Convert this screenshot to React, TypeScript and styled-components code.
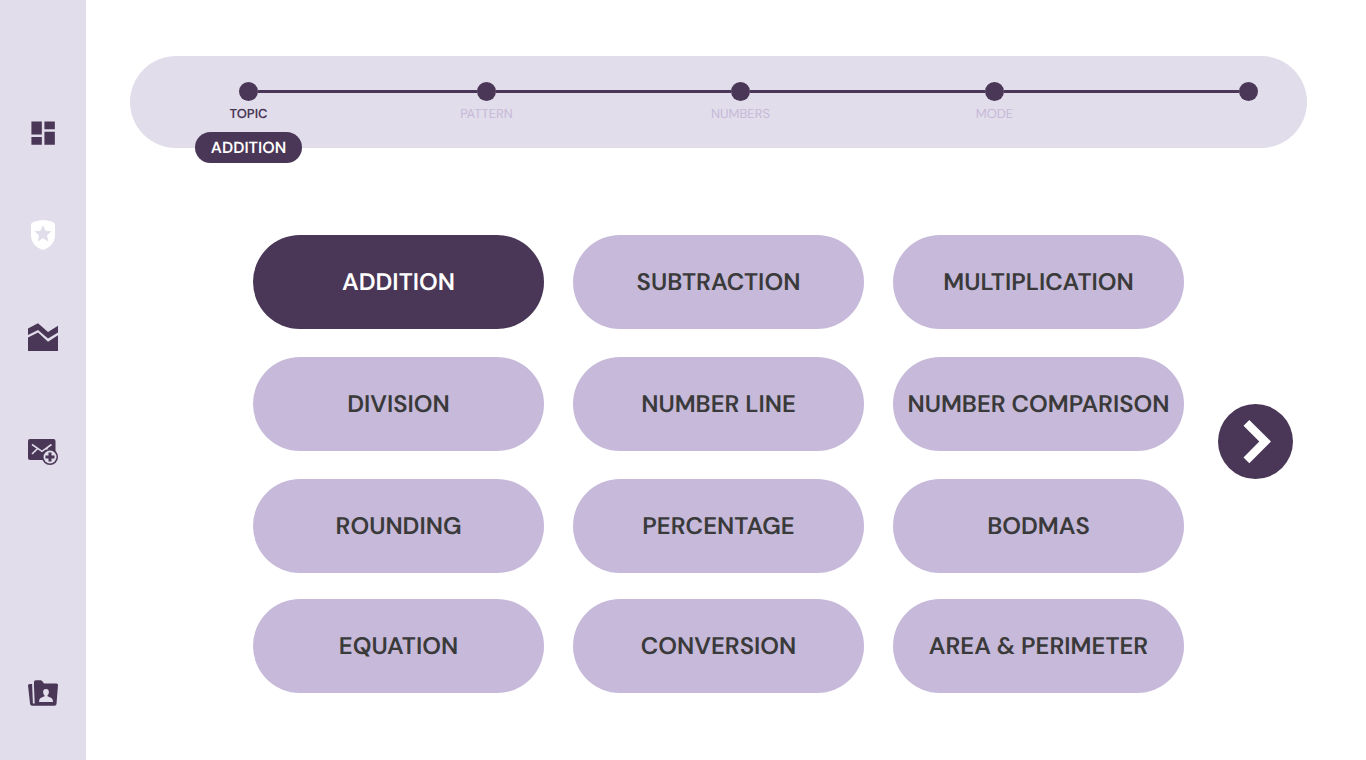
import React, { useState } from 'react';
import styled, { createGlobalStyle } from 'styled-components';

const colors = {
  plum: '#4a3656',
  lilac: '#c6b9d9',
  mist: '#e1ddea',
  ink: '#3a3a3a',
  white: '#ffffff',
};

const GlobalStyle = createGlobalStyle`
  *, *::before, *::after { box-sizing: border-box; }
  body {
    margin: 0;
    background: ${colors.white};
    font-family: "DM Sans", Inter, "Liberation Sans", sans-serif;
    font-optical-sizing: none;
    text-rendering: geometricPrecision;
  }
`;

const Page = styled.div`
  display: flex;
  min-height: 100vh;
`;

const Sidebar = styled.nav`
  display: flex;
  flex-direction: column;
  align-items: center;
  flex: 0 0 86px;
  padding: 117px 0 51px;
  background: ${colors.mist};
`;

const NavGroup = styled.ul<{ $placement?: 'follow' | 'bottom' }>`
  display: flex;
  flex-direction: column;
  gap: 70px;
  margin: 0;
  margin-top: ${(p) => (p.$placement === 'bottom' ? 'auto' : p.$placement === 'follow' ? '83px' : '0')};
  padding: 0;
  list-style: none;
`;

const NavLink = styled.a<{ $current?: boolean }>`
  display: block;
  width: 32px;
  height: 32px;
  color: ${(p) => (p.$current ? colors.white : colors.plum)};

  svg { display: block; }
`;

const Main = styled.main`
  flex: 1;
  min-width: 0;
  padding: 56px 0 67px;
`;

const Header = styled.header`
  height: 92px;
  margin: 0 59px 87px 44px;
  padding: 26px 49px 0 109px;
  border-radius: 46px;
  background: ${colors.mist};
`;

const Steps = styled.ol`
  display: grid;
  grid-template-columns: 238fr 254fr 254fr 254fr 19px;
  margin: 0;
  padding: 0;
  list-style: none;
`;

const Track = styled.div`
  display: flex;
  align-items: center;
`;

const Dot = styled.span`
  flex: 0 0 19px;
  height: 19px;
  border-radius: 50%;
  background: ${colors.plum};
`;

const Line = styled.span`
  flex: 1;
  height: 3px;
  background: ${colors.plum};
`;

const StepInfo = styled.div`
  display: flex;
  flex-direction: column;
  align-items: center;
  gap: 9px;
  width: 19px;
  margin-top: 6px;
`;

const StepLabel = styled.span<{ $active: boolean }>`
  font-size: 13px;
  font-weight: ${(p) => (p.$active ? 600 : 400)};
  line-height: 16px;
  white-space: nowrap;
  color: ${(p) => (p.$active ? colors.plum : colors.lilac)};
`;

const Choice = styled.span`
  flex: none;
  padding: 0 16px;
  border-radius: 16px;
  background: ${colors.plum};
  color: ${colors.white};
  font-size: 16px;
  font-weight: 600;
  line-height: 31px;
  white-space: nowrap;
`;

const Content = styled.div`
  display: flex;
  align-items: flex-start;
  gap: 34px;
  padding: 0 73px 0 167px;
`;

const TopicGrid = styled.div`
  display: grid;
  flex: 1;
  grid-template-columns: repeat(3, minmax(0, 1fr));
  grid-template-rows: 122px 122px 120px 94px;
  align-items: start;
  column-gap: 29px;
`;

const TopicButton = styled.button<{ $selected: boolean }>`
  height: 94px;
  padding: 2px 0 0;
  border: 0;
  border-radius: 47px;
  background: ${(p) => (p.$selected ? colors.plum : colors.lilac)};
  color: ${(p) => (p.$selected ? colors.white : colors.ink)};
  font: inherit;
  font-size: 24px;
  font-weight: 600;
  font-optical-sizing: none;
  line-height: 32px;
  text-rendering: inherit;
  white-space: nowrap;
  cursor: pointer;
`;

const NextButton = styled.button`
  flex: 0 0 75px;
  height: 75px;
  margin-top: 169px;
  padding: 0;
  border: 0;
  border-radius: 50%;
  background: ${colors.plum};
  color: ${colors.white};
  cursor: pointer;

  svg { display: block; }
`;

const DashboardIcon = () => (
  <svg width="32" height="32" viewBox="-0.400 -0.400 24.600 24.600" fill="currentColor" aria-hidden="true">
    <path d="M3 13h8V3H3v10zm0 8h8v-6H3v6zm10 0h8V11h-8v10zm0-18v6h8V3h-8z" />
  </svg>
);

const ShieldIcon = () => (
  <svg width="32" height="32" viewBox="0 0 32 32" fill="currentColor" fillRule="evenodd" aria-hidden="true">
    <path d="M16 1C13 1 8 2.200 5.500 3.500Q4 4.300 4 6V16C4 23.500 9 28.500 16 31C23 28.500 28 23.500 28 16V6Q28 4.300 26.500 3.500C24 2.200 19 1 16 1ZM16 6.200L18.500 11.700L24.500 12.300L20 16.400L21.300 22.400L16 19.300L10.700 22.400L12 16.400L7.500 12.300L13.500 11.700Z" />
  </svg>
);

const ChartIcon = () => (
  <svg width="32" height="32" viewBox="0 0 32 32" fill="currentColor" aria-hidden="true">
    <path d="M1 7.500L11 2.300L21 11L31 4.800V11.500L21 17.500L11 9L1 14Z" />
    <path d="M1 16.500L11 11.400L21 20.800L31 14.200V30H1Z" />
  </svg>
);

const MailAddIcon = () => (
  <svg width="32" height="32" viewBox="0 0 32 32" fill="none" aria-hidden="true">
    <rect x="1" y="3" width="27.500" height="21" rx="2" fill={colors.plum} />
    <path d="M5 8.500L15 15.300L24.500 8.500M5 18L10.500 12.700M19.500 12.700L22 15" stroke={colors.mist} strokeWidth="1.600" />
    <circle cx="23" cy="21" r="8" fill={colors.plum} />
    <circle cx="23" cy="21" r="6.500" fill={colors.mist} />
    <path d="M23 16.500V25.500M18.500 21H27.500" stroke={colors.plum} strokeWidth="3" />
  </svg>
);

const FolderUserIcon = () => (
  <svg width="32" height="32" viewBox="0 0 32 32" aria-hidden="true">
    <path
      fill="currentColor"
      d="M1 8.500Q1 7 2.500 7H7V5Q7 3.200 8.800 3.200H13.500Q14.500 3.200 15.500 4.500L17 6.500H29.500Q31 6.500 31 8L29.500 27Q29.300 28.700 27.500 28.700H5Q3.400 28.700 3.100 27Z"
    />
    <path d="M6 7L6.800 26.500" stroke={colors.mist} strokeWidth="1.800" />
    <path
      fill={colors.mist}
      d="M19 12C17 12 16.100 13.200 16.100 15C16.100 16.500 16.700 17.600 17.500 18.200V19.300L13.500 20.900Q12 21.700 12 25H26Q26 21.700 24.500 20.900L20.500 19.300V18.200C21.300 17.600 21.900 16.500 21.900 15C21.900 13.200 21 12 19 12Z"
    />
  </svg>
);

const NextIcon = () => (
  <svg width="75" height="75" viewBox="0 0 75 75" fill="currentColor" aria-hidden="true">
    <path d="M31.300 15.900L53 37.500L31.300 59.300L25.500 53.500L41.300 37.500L25.500 21.700Z" />
  </svg>
);

const topics = [
  'ADDITION',
  'SUBTRACTION',
  'MULTIPLICATION',
  'DIVISION',
  'NUMBER LINE',
  'NUMBER COMPARISON',
  'ROUNDING',
  'PERCENTAGE',
  'BODMAS',
  'EQUATION',
  'CONVERSION',
  'AREA & PERIMETER',
];

const steps = ['TOPIC', 'PATTERN', 'NUMBERS', 'MODE', ''];

export default function App() {
  const [topic, setTopic] = useState(topics[0]);

  return (
    <>
      <GlobalStyle />
      <Page>
        <Sidebar aria-label="Main">
          <NavGroup>
            <li><NavLink href="#dashboard" aria-label="Dashboard"><DashboardIcon /></NavLink></li>
            <li><NavLink href="#practice" aria-label="Practice" aria-current="page" $current><ShieldIcon /></NavLink></li>
            <li><NavLink href="#reports" aria-label="Reports"><ChartIcon /></NavLink></li>
          </NavGroup>
          <NavGroup $placement="follow">
            <li><NavLink href="#messages" aria-label="Messages"><MailAddIcon /></NavLink></li>
          </NavGroup>
          <NavGroup $placement="bottom">
            <li><NavLink href="#profile" aria-label="Profile"><FolderUserIcon /></NavLink></li>
          </NavGroup>
        </Sidebar>
        <Main>
          <Header>
            <Steps>
              {steps.map((step, index) => (
                <li key={index}>
                  <Track>
                    <Dot />
                    {index < steps.length - 1 && <Line />}
                  </Track>
                  {step && (
                    <StepInfo>
                      <StepLabel $active={index === 0}>{step}</StepLabel>
                      {index === 0 && <Choice>{topic}</Choice>}
                    </StepInfo>
                  )}
                </li>
              ))}
            </Steps>
          </Header>
          <Content>
            <TopicGrid>
              {topics.map((name) => (
                <TopicButton
                  key={name}
                  type="button"
                  $selected={name === topic}
                  aria-pressed={name === topic}
                  onClick={() => setTopic(name)}
                >
                  {name}
                </TopicButton>
              ))}
            </TopicGrid>
            <NextButton type="button" aria-label="Next"><NextIcon /></NextButton>
          </Content>
        </Main>
      </Page>
    </>
  );
}
